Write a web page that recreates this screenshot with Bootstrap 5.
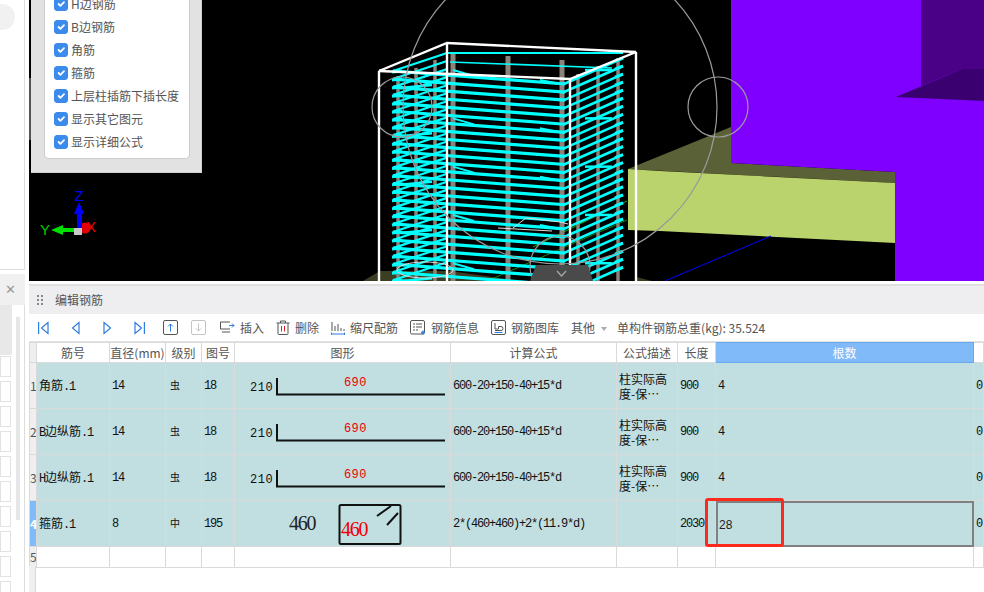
<!DOCTYPE html>
<html lang="zh">
<head>
<meta charset="UTF-8" />
<title>编辑钢筋</title>
<link rel="stylesheet" href="https://cdn.jsdelivr.net/npm/bootstrap@5.3.0/dist/css/bootstrap.min.css" />
<style>
  html, body { width: 984px; height: 592px; overflow: hidden; }
  body { font-family: "Liberation Sans", "Noto Sans CJK SC", sans-serif; font-size: 12px; color: #555; background: #fff; }
  .app-shell { width: 984px; height: 592px; }

  /* left strip */
  .side-strip { width: 29px; height: 592px; flex: none; }
  .side-top { height: 270px; width: 25px; border-right: 1px solid #ddd; border-bottom: 1px solid #ddd; overflow: hidden; }
  .side-dot { width: 30px; height: 26px; border-radius: 13px; background: #f1f1f1; margin-left: -15px; margin-top: 4px; }
  .side-head { height: 31px; width: 25px; margin-top: 4px; background: #f0f0f0; color: #999; font-size: 13px; padding-left: 5px; padding-top: 6px; }
  .side-list { width: 25px; height: 287px; border-right: 1px solid #ddd; overflow: hidden; }
  .side-gray { width: 12px; height: 50px; background: #e8e8e8; margin-bottom: 1px; }
  .side-cell { width: 11px; height: 21px; border: 1px solid #e2e2e2; margin-bottom: 4px; }
  .side-scroll { position: absolute; left: 16px; top: 12px; width: 4px; height: 203px; background: #e6e6e6; }

  /* 3d view */
  .scene { height: 281px; background: #000; }
  .scene-svg { display: block; }
  .opt-panel { position: absolute; left: 2px; top: 0; width: 171px; height: 173px; background: #e2e2e2; border: solid #d0d0d0; border-width: 0 1px 1px 0; }
  .opt-inner { width: 146px; height: 159px; margin-left: 13px; background: #fff; border-radius: 0 0 5px 5px; border: solid #ccc; border-width: 0 1px 1px 1px; padding: 0 0 0 9px; overflow: hidden; }
  .opt-row { height: 23px; gap: 3px; color: #555; font-family: "Noto Sans CJK SC", sans-serif; font-size: 12px; white-space: nowrap; }
  .opt-first { margin-top: -8px; }
  .opt-check { width: 14px; height: 14px; margin: 0; flex: none; }
  .opt-check:checked { background-color: #3a8bec; border-color: #3a8bec; }

  /* editor panel */
  .edit-gap { height: 3px; background: #fff; }
  .edit-line { height: 2px; background: #e0e0e0; }
  .edit-title { height: 28px; background: #eeeef0; padding-left: 7px; gap: 12px; font-family: "Noto Sans CJK SC", sans-serif; }
  .grip { width: 7px; height: 13px; background-image: radial-gradient(circle, #888 1.1px, transparent 1.2px); background-size: 4px 4px; }
  .tool-bar { height: 28px; font-family: "Noto Sans CJK SC", sans-serif; white-space: nowrap; padding-left: 9px; border-bottom: 1px solid #e2e2e2; }
  .tool-bar svg { flex: none; display: block; }
  .nav-gap-1 { margin-left: 22px; }
  .nav-gap-2 { margin-left: 23px; }
  .nav-gap-5 { margin-left: 22px; }
  .nav-gap-3 { margin-left: 18px; }
  .nav-gap-4 { margin-left: 13px; }
  .tool-item { margin-left: 12px; }
  .tool-icon-gap { margin-left: 5px; }
  .tool-first { margin-left: 14px; }
  .tool-caret { width: 0; height: 0; border: 3px solid transparent; border-top: 4px solid #aaa; border-bottom: 0; margin-left: 6px; margin-top: 2px; }
  .tool-sum { margin-left: 10px; }

  /* rebar grid */
  .rebar-wrap { position: relative; height: 250px; overflow: hidden; }
  .rebar-grid { table-layout: fixed; border-collapse: collapse; width: 954px; margin: 0; }
  .rebar-grid th, .rebar-grid td { border: 1px solid #dadada; padding: 0; overflow: hidden; white-space: nowrap; vertical-align: middle; }
  .rebar-grid th { height: 20px; background: #fff; font-weight: 400; text-align: center; color: #555; font-family: "Noto Sans CJK SC", sans-serif; font-size: 12px; line-height: 14px; }
  .rebar-grid tbody td { height: 46px; background: #c1dee0; color: #111; font-family: "Liberation Mono", "Noto Sans CJK SC", monospace; font-size: 12px; letter-spacing: -1.2px; padding-left: 2px; }
  .rebar-grid tbody tr.row-empty td { height: 21px; background: #fff; }
  .rebar-grid .row-no { background: #efefef !important; color: #555; font-family: "Noto Sans CJK SC", sans-serif; font-size: 12px; letter-spacing: 0; padding: 0; text-align: center; }
  .rebar-grid .row-no-active { background: #80baf8 !important; color: #fff; font-weight: 700; }
  .rebar-grid th.row-no { background: #efefef; }
  .rebar-grid th.col-active { background: #80baf8; color: #fff; border-color: #6aa8ee; }
  .rebar-grid tbody td.shape-cell { padding: 0; }
  .shape-cell svg { display: block; }
  .cjk { font-family: "Noto Sans CJK SC", sans-serif; font-size: 12px; letter-spacing: 0; }
  .rebar-grid tbody td.grade-cell { padding-left: 4px; }
  .grade-cell .cjk { font-size: 10px; }
  .wrap-cell .cjk { display: block; line-height: 15px; }
  .rebar-grid tbody td.cell-edit { outline: 2px solid #808080; outline-offset: -2px; font-family: "Liberation Sans", sans-serif; font-size: 12px; letter-spacing: 0; padding-top: 2px; padding-left: 3px; color: #222; }
  .row-rail { position: absolute; left: 0; top: 224px; width: 7px; height: 30px; background: #efefef; border-right: 1px solid #dadada; }
  .red-mark { position: absolute; left: 676px; top: 156px; width: 79px; height: 49px; border: 3px solid #fb2a1c; border-radius: 3px; }
</style>
</head>
<body>
<div class="app-shell d-flex">
  <div class="side-strip position-relative">
    <div class="side-top"><div class="side-dot"></div></div>
    <div class="side-head">✕</div>
    <div class="side-list position-relative">
      <div class="side-gray"></div>
      <div class="side-cell"></div><div class="side-cell"></div><div class="side-cell"></div><div class="side-cell"></div><div class="side-cell"></div>
      <div class="side-cell"></div><div class="side-cell"></div><div class="side-cell"></div><div class="side-cell"></div><div class="side-cell"></div>
      <div class="side-scroll"></div>
    </div>
  </div>

  <div class="flex-grow-1 d-flex flex-column">
    <div class="scene position-relative">
      <svg id="scene" class="scene-svg" width="955" height="281" viewBox="29 0 955 281" xmlns="http://www.w3.org/2000/svg">
        <!-- ground, beam, wall -->
        <polygon points="363,281 380,271 450,271 520,281" fill="#3b3e22"/>
        <polygon points="636,277 652,281 636,281" fill="#3b3e22"/>
        <polygon points="628,169 731,127 731,163 895,172 895,183" fill="#5b6136"/>
        <polygon points="628,169 660,171 895,183 895,243 660,231 628,230" fill="#bbd36c"/>
        <polygon points="731,0 984,0 984,281 895,281 895,172 731,163" fill="#8000ff"/>
        <polygon points="921,0 984,0 984,69 962,69 921,86" fill="#4b0088"/>
        <polygon points="896,97 962,69 984,69 984,101" fill="#3a0070"/>
        <line x1="665" y1="281" x2="771" y2="236" stroke="#0000ff"/>
        <line x1="487" y1="281" x2="627" y2="220" stroke="#0a8a0a"/>
        <line x1="533" y1="247" x2="627" y2="201" stroke="#12b012"/>
        <g id="bars"></g>
        <g id="hoops"></g>
        <!-- cage outline -->
        <g fill="none" stroke="#fff" stroke-width="2.400">
          <polygon points="379,71 447,43 636,52 570,79"/>
          <line x1="379" y1="71" x2="379" y2="281"/>
          <line x1="447" y1="43" x2="447" y2="281"/>
          <line x1="570" y1="79" x2="570" y2="281"/>
          <line x1="636" y1="52" x2="636" y2="281"/>
        </g>
        <g fill="none" stroke="#ddd" stroke-width="1">
          <polyline points="513,228 526,218 560,222 568,224"/>
          <line x1="498" y1="228" x2="552" y2="231"/>
          <ellipse cx="425" cy="270" rx="28" ry="8"/>
        </g>
        <!-- gizmo circles -->
        <g fill="none" stroke="#9b9b9b" stroke-width="1.200">
          <circle cx="560" cy="107" r="157"/>
          <circle cx="402" cy="107" r="30"/>
          <circle cx="718" cy="107" r="30"/>
          <circle cx="560" cy="266" r="30"/>
        </g>
        <polygon points="530,281 536,265 588,265 593,281" fill="#4a4a4a"/>
        <polyline points="557,271 561.500,276 566,271" fill="none" stroke="#aaa" stroke-width="1.200"/>
        <rect x="29" y="78" width="2" height="62" fill="#555"/>
        <!-- axes -->
        <circle cx="85" cy="228" r="5.500" fill="#e00000"/>
        <rect x="77" y="212" width="5" height="17" fill="#0000ff"/>
        <polygon points="79,202 84,214 74,214" fill="#0000ff"/>
        <rect x="62" y="228" width="13" height="4" fill="#00e000"/>
        <polygon points="51,230 63,225 63,235" fill="#00e000"/>
        <rect x="74" y="228" width="8" height="7" fill="#c8c8c8"/>
        <text x="79" y="201" text-anchor="middle" font-family="Liberation Sans" font-size="15" fill="#0000ff">Z</text>
        <text x="45" y="235" text-anchor="middle" font-family="Liberation Sans" font-size="15" fill="#00d000">Y</text>
        <text x="91" y="232" text-anchor="middle" font-family="Liberation Sans" font-size="15" fill="#f00000">X</text>
      </svg>

      <div class="opt-panel">
        <div class="opt-inner">
          <label class="d-flex align-items-center opt-row opt-first"><input class="form-check-input opt-check" type="checkbox" checked /><span>H边钢筋</span></label>
          <label class="d-flex align-items-center opt-row"><input class="form-check-input opt-check" type="checkbox" checked /><span>B边钢筋</span></label>
          <label class="d-flex align-items-center opt-row"><input class="form-check-input opt-check" type="checkbox" checked /><span>角筋</span></label>
          <label class="d-flex align-items-center opt-row"><input class="form-check-input opt-check" type="checkbox" checked /><span>箍筋</span></label>
          <label class="d-flex align-items-center opt-row"><input class="form-check-input opt-check" type="checkbox" checked /><span>上层柱插筋下插长度</span></label>
          <label class="d-flex align-items-center opt-row"><input class="form-check-input opt-check" type="checkbox" checked /><span>显示其它图元</span></label>
          <label class="d-flex align-items-center opt-row"><input class="form-check-input opt-check" type="checkbox" checked /><span>显示详细公式</span></label>
        </div>
      </div>
    </div>

    <div class="edit-gap"></div>
    <div class="edit-line"></div>
    <div class="edit-title d-flex align-items-center">
      <span class="grip"></span>
      <span>编辑钢筋</span>
    </div>

    <div class="tool-bar d-flex align-items-center">
      <svg width="11" height="14" viewBox="0 0 11 14" fill="none" stroke="#2f7de0" stroke-width="1.200"><path d="M.6 1v12M10 1.500 3.500 7 10 12.500z"/></svg>
      <svg class="nav-gap-1" width="9" height="14" viewBox="0 0 9 14" fill="none" stroke="#2f7de0" stroke-width="1.200"><path d="M8 1.500 1.500 7 8 12.500z"/></svg>
      <svg class="nav-gap-2" width="9" height="14" viewBox="0 0 9 14" fill="none" stroke="#2f7de0" stroke-width="1.200"><path d="M1 1.500 7.500 7 1 12.500z"/></svg>
      <svg class="nav-gap-5" width="11" height="14" viewBox="0 0 11 14" fill="none" stroke="#2f7de0" stroke-width="1.200"><path d="M10.400 1v12M1 1.500 7.500 7 1 12.500z"/></svg>
      <svg class="nav-gap-3" width="15" height="15" viewBox="0 0 15 15" fill="none"><rect x=".5" y=".5" width="14" height="14" rx="1.500" stroke="#555"/><path d="M7.500 11.500V4M5 6.500l2.500-2.500L10 6.500" stroke="#2f7de0"/></svg>
      <svg class="nav-gap-4" width="15" height="15" viewBox="0 0 15 15" fill="none"><rect x=".5" y=".5" width="14" height="14" rx="1.500" stroke="#c4c4c4"/><path d="M7.500 3.500V11M5 8.500l2.500 2.500L10 8.500" stroke="#c4c4c4"/></svg>
      <div class="tool-first d-flex align-items-center"><svg width="15" height="13" viewBox="0 0 15 13" fill="none"><path d="M10 1H.5v7H10" stroke="#555"/><path d="M2 11h8" stroke="#555"/><path d="M9 4.500h5M12 2.500l2 2-2 2" stroke="#2f7de0"/></svg><span class="tool-icon-gap">插入</span></div>
      <div class="tool-item d-flex align-items-center"><svg width="14" height="15" viewBox="0 0 14 15" fill="none"><path d="M.5 3h13M4.500 3V1h5v2M2 3v10.500a1 1 0 0 0 1 1h8a1 1 0 0 0 1-1V3" stroke="#555"/><path d="M5.500 6v5.500M8.500 6v5.500" stroke="#e02020"/></svg><span class="tool-icon-gap">删除</span></div>
      <div class="tool-item d-flex align-items-center"><svg width="14" height="14" viewBox="0 0 14 14" fill="none"><path d="M1 1v9M4 5v5M7 3v7M10 7v3M13 8v2" stroke="#555"/><path d="M.5 13h13M.5 11.500v3M13.500 11.500v3" stroke="#2f7de0"/></svg><span class="tool-icon-gap">缩尺配筋</span></div>
      <div class="tool-item d-flex align-items-center"><svg width="16" height="15" viewBox="0 0 16 15" fill="none"><rect x=".5" y=".5" width="14" height="13.500" rx="1.500" stroke="#555"/><path d="M3 4h2M6 4h6M3 7h2M6 7h6M3 10h2M6 10h2" stroke="#555"/><path d="M11 12.500h4M13 10.500v4" stroke="#2f7de0" stroke-width="1.400"/></svg><span class="tool-icon-gap">钢筋信息</span></div>
      <div class="tool-item d-flex align-items-center"><svg width="15" height="15" viewBox="0 0 15 15" fill="none"><rect x=".5" y=".5" width="14" height="14" rx="1.500" stroke="#555"/><path d="M4 3v6h3.500V6.500H10a1.500 1.500 0 0 1 0 4H4" stroke="#555"/><path d="M3.500 12.500h8" stroke="#2f7de0"/></svg><span class="tool-icon-gap">钢筋图库</span></div>
      <span class="tool-item">其他</span><span class="tool-caret"></span>
      <span class="tool-sum">单构件钢筋总重(kg): 35.524</span>
    </div>

    <div class="rebar-wrap">
      <table class="table rebar-grid">
        <colgroup>
          <col style="width:7px"/><col style="width:73px"/><col style="width:56px"/><col style="width:36px"/><col style="width:33px"/>
          <col style="width:216px"/><col style="width:166px"/><col style="width:61px"/><col style="width:38px"/><col style="width:258px"/><col style="width:10px"/>
        </colgroup>
        <thead>
          <tr>
            <th class="row-no"></th><th>筋号</th><th>直径(mm)</th><th>级别</th><th>图号</th><th>图形</th><th>计算公式</th><th>公式描述</th><th>长度</th><th class="col-active">根数</th><th></th>
          </tr>
        </thead>
        <tbody id="rows"></tbody>
      </table>
      <div class="row-rail"></div>
      <div class="red-mark"></div>
    </div>
  </div>
</div>

<script>
  // cage rebars and hoops, generated because there are so many of them
  const ns = "http://www.w3.org/2000/svg";
  function addLine(parent, x1, y1, x2, y2, color, width) {
    const l = document.createElementNS(ns, "line");
    l.setAttribute("x1", x1); l.setAttribute("y1", y1);
    l.setAttribute("x2", x2); l.setAttribute("y2", y2);
    l.setAttribute("stroke", color); l.setAttribute("stroke-width", width);
    parent.appendChild(l);
  }
  const bars = document.querySelector("#bars");
  const barTops = [[398, 76, 3.5], [416, 68, 3.5], [435, 60, 3.5], [453, 54, 5], [508, 56, 5], [562, 60, 5], [578, 74, 3.5], [598, 66, 3.5], [618, 58, 3.5]];
  for (let i = 0; i < barTops.length; i++) {
    addLine(bars, barTops[i][0], barTops[i][1], barTops[i][0], 281, "#8b827a", barTops[i][2]);
  }
  const cyan = "#00ffff";
  const hoops = document.querySelector("#hoops");
  addLine(hoops, 447, 53, 623, 53, cyan, 2);
  addLine(hoops, 450, 62, 612, 68, cyan, 1.6);
  for (let i = 0; i < 27; i++) {
    const y = i * 8.05;
    addLine(hoops, 393, 71 + y, 447, 53 + y, cyan, 2.2);
    addLine(hoops, 393, 71 + y, 565, 84 + y, cyan, 3.2);
    addLine(hoops, 564, 84 + y, 623, 58 + y, cyan, 2.6);
    addLine(hoops, 392, 72 + y, 402, 71 + y, cyan, 3);
    addLine(hoops, 615, 61 + y, 623, 58 + y, cyan, 3);
    if (i % 6 === 1) {
      addLine(hoops, 453, 62 + y, 474, 68 + y, cyan, 2);
      addLine(hoops, 540, 72 + y, 560, 76 + y, cyan, 2);
      addLine(hoops, 400, 80 + y, 432, 77 + y, cyan, 2.5);
      addLine(hoops, 585, 62 + y, 612, 62 + y, cyan, 2.5);
    }
  }

  // table rows
  const data = [
    { name: "<span class='cjk'>角筋</span>.1", dia: "14", no: "18", shape: "bent" },
    { name: "B<span class='cjk'>边纵筋</span>.1", dia: "14", no: "18", shape: "bent" },
    { name: "H<span class='cjk'>边纵筋</span>.1", dia: "14", no: "18", shape: "bent" },
    { name: "<span class='cjk'>箍筋</span>.1", dia: "8", no: "195", shape: "hoop" }
  ];
  function shapeSvg(kind) {
    if (kind === "bent") {
      return `<svg width="215" height="45" viewBox="0 0 215 45"><text x="15" y="28" font-family="Liberation Mono" font-size="12" letter-spacing=".6" fill="#111">210</text><path d="M42 15V31.500H210" fill="none" stroke="#111" stroke-width="2"/><text x="109" y="23" font-family="Liberation Mono" font-size="12" letter-spacing=".4" fill="#f00000">690</text></svg>`;
    }
    return `<svg width="215" height="45" viewBox="0 0 215 45"><text x="54" y="29" font-family="Liberation Serif" font-size="20" fill="#222">460</text><rect x="104.500" y="4" width="61" height="39" rx="1.500" fill="none" stroke="#111" stroke-width="2"/><path d="M142 15 156 5M152 24 163 12" stroke="#111" stroke-width="2"/><text x="106" y="35" font-family="Liberation Serif" font-size="20" fill="#f00000">460</text></svg>`;
  }
  const rows = document.querySelector("#rows");
  for (let i = 0; i < data.length; i++) {
    const d = data[i];
    const tr = document.createElement("tr");
    const last = i === 3;
    tr.innerHTML =
      `<td class="row-no ${last ? "row-no-active" : ""}">${i + 1}</td>` +
      `<td>${d.name}</td><td>${d.dia}</td>` +
      `<td class="grade-cell"><span class="cjk">${last ? "中" : "虫"}</span></td><td>${d.no}</td>` +
      `<td class="shape-cell">${shapeSvg(d.shape)}</td>` +
      `<td>${last ? "2*(460+460)+2*(11.9*d)" : "600-20+150-40+15*d"}</td>` +
      `<td class="wrap-cell">${last ? "" : "<span class='cjk'>柱实际高</span><span class='cjk'>度-保⋯</span>"}</td>` +
      `<td>${last ? "2030" : "900"}</td>` +
      `<td class="${last ? "cell-edit" : ""}">${last ? "28" : "4"}</td>` +
      `<td>0</td>`;
    rows.appendChild(tr);
  }
  const empty = document.createElement("tr");
  empty.className = "row-empty";
  empty.innerHTML = `<td class="row-no">5</td><td></td><td></td><td></td><td></td><td></td><td></td><td></td><td></td><td></td><td></td>`;
  rows.appendChild(empty);
</script>
<script src="https://cdn.jsdelivr.net/npm/bootstrap@5.3.0/dist/js/bootstrap.bundle.min.js"></script>
</body>
</html>
